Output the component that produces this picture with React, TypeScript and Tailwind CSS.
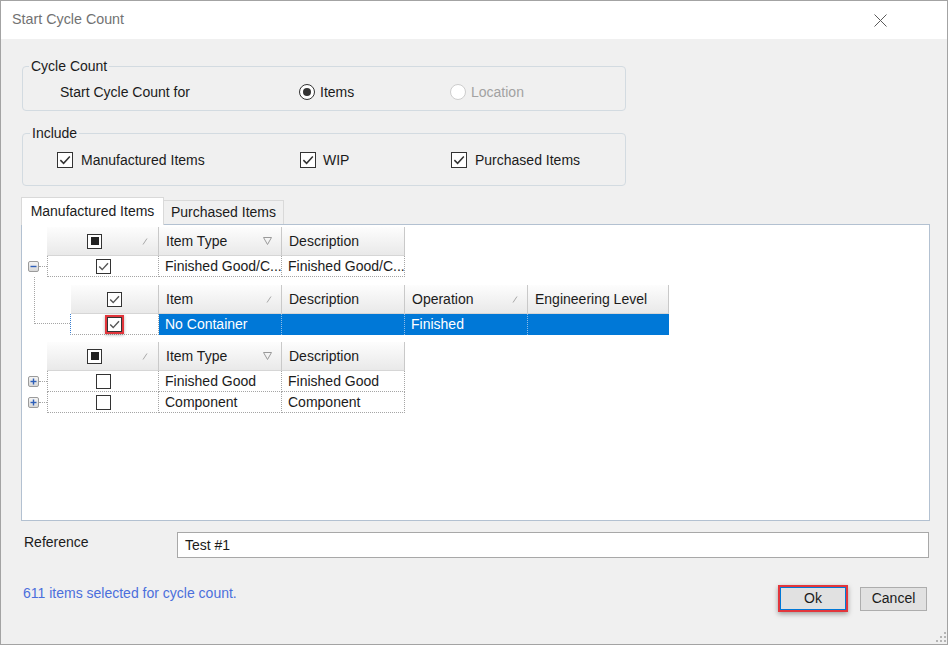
import React from "react";

const font = "font-['Liberation_Sans',Arial,sans-serif]";

const Check = ({ size = 15, color = "#444" }: { size?: number; color?: string }) => (
  <svg width={size - 2} height={size - 2} viewBox="0 0 13 13">
    <polyline points="2.2,6.6 5.2,9.6 11,3.2" fill="none" stroke={color} strokeWidth="1.4" />
  </svg>
);

const CheckBox = ({ checked, big }: { checked?: boolean; big?: boolean }) => (
  <div
    className={
      big
        ? "w-[16px] h-[16px] border border-[#333] bg-white flex items-center justify-center"
        : "w-[15px] h-[15px] border border-[#333] bg-white flex items-center justify-center"
    }
  >
    {checked && <Check size={big ? 16 : 15} color={big ? "#333" : "#555"} />}
  </div>
);

const MixedBox = () => (
  <div className="w-[15px] h-[15px] border-[1.5px] border-[#333] bg-white flex items-center justify-center">
    <div className="w-[8px] h-[8px] bg-[#222]" />
  </div>
);

const SortGlyph = () => (
  <svg width="6" height="7" viewBox="0 0 6 7">
    <line x1="1" y1="6.5" x2="5" y2="0.5" stroke="#a8a8a8" strokeWidth="1" />
  </svg>
);

const FilterGlyph = () => (
  <svg width="9" height="8" viewBox="0 0 9 8">
    <polygon points="0.5,0.5 8.5,0.5 4.5,7.5" fill="none" stroke="#9a9a9a" strokeWidth="1" />
  </svg>
);

const HeaderCell = ({
  w,
  children,
  glyph,
}: {
  w: string;
  children?: React.ReactNode;
  glyph?: React.ReactNode;
}) => (
  <div
    className={`${w} h-[29px] shrink-0 flex items-center pl-[7px] bg-linear-to-b from-[#fdfdfd] to-[#e9e9e9] border-r border-b border-r-[#c9c9c9] border-b-[#d6d6d6] text-[14px] text-[#1b1b1b]`}
  >
    <span className="flex-1 whitespace-nowrap">{children}</span>
    {glyph && <span className="pr-[9px]">{glyph}</span>}
  </div>
);

const CheckHeader = ({ w, mixed }: { w: string; mixed?: boolean }) => (
  <div className={`${w} h-[29px] shrink-0 flex items-center bg-linear-to-b from-[#fdfdfd] to-[#e9e9e9] border-r border-b border-r-[#c9c9c9] border-b-[#d6d6d6]`}>
    <div className="flex-1 flex justify-center">
      {mixed ? <MixedBox /> : <CheckBox checked />}
    </div>
    {mixed && (
      <span className="pr-[10px]">
        <SortGlyph />
      </span>
    )}
  </div>
);

const Cell = ({ w, children, first }: { w: string; children?: React.ReactNode; first?: boolean }) => (
  <div
    className={`${w} h-[21px] shrink-0 flex items-center border-r border-b border-dotted border-[#a5a5a5] text-[14px] text-[#1b1b1b] ${
      first ? "border-l justify-center pl-[1px]" : "pl-[6px] overflow-hidden whitespace-nowrap"
    }`}
  >
    {children}
  </div>
);

const Expander = ({ open }: { open?: boolean }) => (
  <div className="w-[25px] h-[21px] shrink-0 flex items-center">
    <div className="ml-[6px] w-[11px] h-[11px] rounded-[2px] border border-[#9b9b9b] bg-linear-to-b from-[#f4f4f4] to-[#d8d8d8] flex items-center justify-center">
      <svg width="7" height="7" viewBox="0 0 7 7">
        <line x1="0.5" y1="3.5" x2="6.5" y2="3.5" stroke="#2e5fb8" strokeWidth="1.4" />
        {!open && <line x1="3.5" y1="0.5" x2="3.5" y2="6.5" stroke="#2e5fb8" strokeWidth="1.4" />}
      </svg>
    </div>
    <div className="flex-1 border-t border-dotted border-[#a5a5a5]" />
  </div>
);

export default function App() {
  return (
    <div className={`w-[948px] h-[645px] border border-[#a3a3a3] bg-[#f0f0f0] flex flex-col ${font}`}>
      {/* Title bar */}
      <div className="h-[38px] bg-white flex items-center justify-between pl-[11px] pr-[60px] shrink-0">
        <span className="text-[14.3px] text-[#727272]">Start Cycle Count</span>
        <svg width="13" height="13" viewBox="0 0 13 13">
          <line x1="0.5" y1="0.5" x2="12.5" y2="12.5" stroke="#5a5a5a" strokeWidth="1" />
          <line x1="12.5" y1="0.5" x2="0.5" y2="12.5" stroke="#5a5a5a" strokeWidth="1" />
        </svg>
      </div>

      <div className="flex-1 flex flex-col pl-[20px] pr-[18px]">
        {/* Cycle Count group */}
        <fieldset className="mt-[19px] ml-[1px] w-[604px] border border-[#d3dbe1] rounded-[4px] px-[6px] pt-[10px] pb-[10px]">
          <legend className="px-[2px] text-[14px] leading-[16px] text-[#1b1b1b]">Cycle Count</legend>
          <div className="flex items-center h-[16px] text-[14px] text-[#1b1b1b]">
            <span className="ml-[31px] w-[239px]">Start Cycle Count for</span>
            <div className="w-[151px] flex items-center gap-[5px]">
              <div className="w-[16px] h-[16px] rounded-full border border-[#333] bg-white flex items-center justify-center">
                <div className="w-[8px] h-[8px] rounded-full bg-[#333]" />
              </div>
              <span>Items</span>
            </div>
            <div className="flex items-center gap-[5px] text-[#a2a2a2]">
              <div className="w-[16px] h-[16px] rounded-full border border-[#cdcdcd] bg-white" />
              <span>Location</span>
            </div>
          </div>
        </fieldset>

        {/* Include group */}
        <fieldset className="mt-[14px] ml-[1px] w-[604px] border border-[#d3dbe1] rounded-[4px] px-[6px] pt-[11px] pb-[17px]">
          <legend className="ml-[1px] px-[2px] text-[14px] leading-[16px] text-[#1b1b1b]">Include</legend>
          <div className="flex items-center h-[16px] text-[14px] text-[#1b1b1b]">
            <div className="ml-[28px] w-[243px] flex items-center gap-[8px]">
              <CheckBox checked big />
              <span>Manufactured Items</span>
            </div>
            <div className="w-[151px] flex items-center gap-[7px]">
              <CheckBox checked big />
              <span>WIP</span>
            </div>
            <div className="flex items-center gap-[8px]">
              <CheckBox checked big />
              <span>Purchased Items</span>
            </div>
          </div>
        </fieldset>

        {/* Tabs */}
        <div className="mt-[11px] flex items-end text-[14px] text-[#1b1b1b]">
          <div className="relative z-10 -mb-px w-[143px] h-[28px] bg-white border border-b-0 border-[#d9d9d9] flex items-center justify-center">
            Manufactured Items
          </div>
          <div className="w-[120px] h-[24px] border border-l-0 border-b-0 border-[#d9d9d9] flex items-center justify-center">
            Purchased Items
          </div>
        </div>

        {/* Grid */}
        <div className="h-[297px] mr-[-1px] bg-white border border-[#b3c1d1] pt-[2px] flex flex-col">
          {/* Band 1 */}
          <div className="ml-[25px] flex">
            <CheckHeader w="w-[112px]" mixed />
            <HeaderCell w="w-[123px]" glyph={<FilterGlyph />}>Item Type</HeaderCell>
            <HeaderCell w="w-[123px]">Description</HeaderCell>
          </div>
          <div className="flex">
            <Expander open />
            <Cell w="w-[112px]" first>
              <CheckBox checked />
            </Cell>
            <Cell w="w-[123px]">Finished Good/C...</Cell>
            <Cell w="w-[123px]">Finished Good/C...</Cell>
          </div>

          {/* Child band */}
          <div className="flex">
            <div className="w-[48px] shrink-0">
              <div className="ml-[12px] w-[36px] h-[47px] border-l border-b border-dotted border-[#a5a5a5]" />
            </div>
            <div className="flex flex-col mt-[8px]">
              <div className="flex ml-[1px]">
                <CheckHeader w="w-[88px]" />
                <HeaderCell w="w-[123px]" glyph={<SortGlyph />}>Item</HeaderCell>
                <HeaderCell w="w-[123px]">Description</HeaderCell>
                <HeaderCell w="w-[123px]" glyph={<SortGlyph />}>Operation</HeaderCell>
                <HeaderCell w="w-[141px]">Engineering Level</HeaderCell>
              </div>
              <div className="flex text-[14px]">
                <div className="w-[89px] h-[21px] shrink-0 flex items-center justify-center border-l border-b border-r border-dotted border-l-[#3a7fd0] border-b-[#a5a5a5] border-r-[#a5a5a5] bg-white">
                  <div className="border-2 border-[#e2363c] shadow-[0_1px_3px_rgba(0,0,0,0.3)]">
                    <CheckBox checked />
                  </div>
                </div>
                <div className="flex bg-[#0078d7] text-white">
                  <div className="w-[123px] h-[21px] pl-[6px] flex items-center border-r border-dotted border-[#8fbce8]">No Container</div>
                  <div className="w-[123px] h-[21px] border-r border-dotted border-[#8fbce8]" />
                  <div className="w-[123px] h-[21px] pl-[6px] flex items-center border-r border-dotted border-[#8fbce8]">Finished</div>
                  <div className="w-[141px] h-[21px]" />
                </div>
              </div>
            </div>
          </div>

          {/* Band 2 */}
          <div className="mt-[7px] ml-[25px] flex">
            <CheckHeader w="w-[112px]" mixed />
            <HeaderCell w="w-[123px]" glyph={<FilterGlyph />}>Item Type</HeaderCell>
            <HeaderCell w="w-[123px]">Description</HeaderCell>
          </div>
          <div className="flex">
            <Expander />
            <Cell w="w-[112px]" first>
              <CheckBox />
            </Cell>
            <Cell w="w-[123px]">Finished Good</Cell>
            <Cell w="w-[123px]">Finished Good</Cell>
          </div>
          <div className="flex">
            <Expander />
            <Cell w="w-[112px]" first>
              <CheckBox />
            </Cell>
            <Cell w="w-[123px]">Component</Cell>
            <Cell w="w-[123px]">Component</Cell>
          </div>
        </div>

        {/* Reference */}
        <div className="mt-[11px] flex items-start text-[14px] text-[#1b1b1b]">
          <span className="ml-[3px] w-[153px]">Reference</span>
          <div className="flex-1 h-[26px] bg-white border border-[#a8a8a8] flex items-center pl-[7px]">Test #1</div>
        </div>

        {/* Status + buttons */}
        <div className="mt-[25px] flex items-center text-[14px]">
          <span className="ml-[2px] mb-[10px] flex-1 text-[#4b6fdc]">611 items selected for cycle count.</span>
          <div className="border-2 border-[#e2363c] shadow-[0_2px_5px_rgba(0,0,0,0.35)]">
            <button className="w-[66px] h-[23px] bg-[#e1e1e1] border border-[#0078d7] text-[#1b1b1b] flex items-center justify-center">
              Ok
            </button>
          </div>
          <button className="ml-[12px] mr-[2px] w-[67px] h-[24px] bg-[#e1e1e1] border border-[#adadad] text-[#1b1b1b] flex items-center justify-center">
            Cancel
          </button>
        </div>

        <div className="flex-1 flex items-end justify-end mr-[-17px] pb-[2px]">
          <svg width="11" height="11" viewBox="0 0 11 11">
            {[
              [9, 1],
              [9, 5],
              [5, 5],
              [9, 9],
              [5, 9],
              [1, 9],
            ].map(([x, y]) => (
              <rect key={`${x}-${y}`} x={x} y={y} width="2" height="2" fill="#b5b5b5" />
            ))}
          </svg>
        </div>
      </div>
    </div>
  );
}
